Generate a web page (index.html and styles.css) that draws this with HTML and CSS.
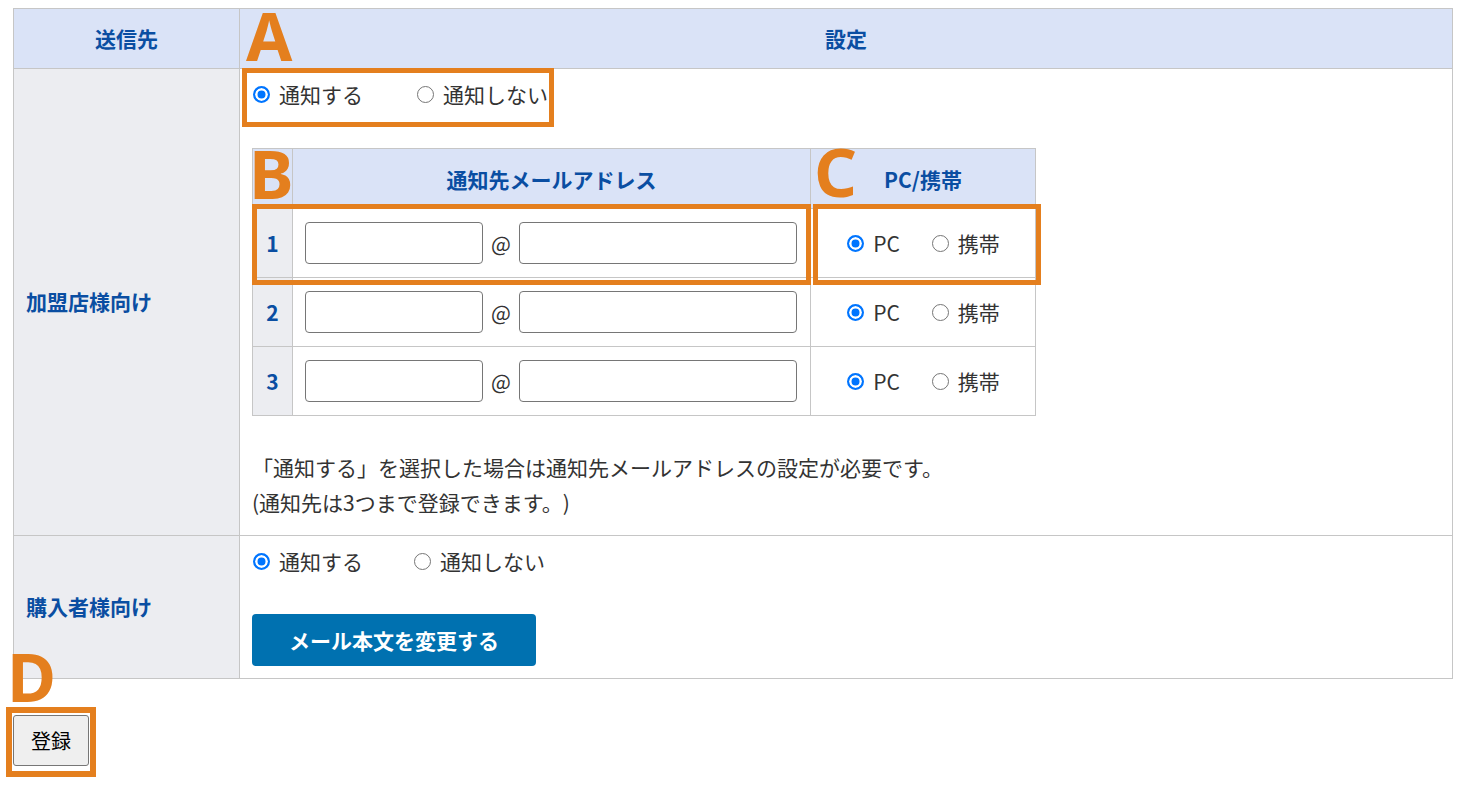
FILE: index.html
```html
<!DOCTYPE html>
<html lang="ja">
<head>
<meta charset="utf-8">
<title>通知設定</title>
<link rel="stylesheet" href="styles.css">
</head>
<body>
<div class="page">
  <table class="main">
    <colgroup><col class="c-label"><col></colgroup>
    <thead>
      <tr><th>送信先</th><th>設定</th></tr>
    </thead>
    <tbody>
      <tr>
        <th class="label">加盟店様向け</th>
        <td class="setting setting-shop">
          <div class="radios">
            <label class="opt opt-gap"><input type="radio" name="shop" checked><span>通知する</span></label>
            <label class="opt"><input type="radio" name="shop"><span>通知しない</span></label>
          </div>
          <table class="mails">
            <colgroup><col class="c-num"><col class="c-mail"><col class="c-pc"></colgroup>
            <thead>
              <tr><th></th><th>通知先メールアドレス</th><th>PC/携帯</th></tr>
            </thead>
            <tbody>
              <tr>
                <th class="num">1</th>
                <td class="mail"><div class="mail-row"><input class="field field-user" type="text"><span class="at">@</span><input class="field field-domain" type="text"></div></td>
                <td class="pc"><div class="pc-row"><label class="opt opt-pc"><input type="radio" name="d1" checked><span>PC</span></label><label class="opt"><input type="radio" name="d1"><span>携帯</span></label></div></td>
              </tr>
              <tr>
                <th class="num">2</th>
                <td class="mail"><div class="mail-row"><input class="field field-user" type="text"><span class="at">@</span><input class="field field-domain" type="text"></div></td>
                <td class="pc"><div class="pc-row"><label class="opt opt-pc"><input type="radio" name="d2" checked><span>PC</span></label><label class="opt"><input type="radio" name="d2"><span>携帯</span></label></div></td>
              </tr>
              <tr>
                <th class="num">3</th>
                <td class="mail"><div class="mail-row"><input class="field field-user" type="text"><span class="at">@</span><input class="field field-domain" type="text"></div></td>
                <td class="pc"><div class="pc-row"><label class="opt opt-pc"><input type="radio" name="d3" checked><span>PC</span></label><label class="opt"><input type="radio" name="d3"><span>携帯</span></label></div></td>
              </tr>
            </tbody>
          </table>
          <p class="note">「通知する」を選択した場合は通知先メールアドレスの設定が必要です。<br>(通知先は3つまで登録できます。)</p>
        </td>
      </tr>
      <tr>
        <th class="label">購入者様向け</th>
        <td class="setting setting-buyer">
          <div class="radios">
            <label class="opt opt-gap2"><input type="radio" name="buyer" checked><span>通知する</span></label>
            <label class="opt"><input type="radio" name="buyer"><span>通知しない</span></label>
          </div>
          <button class="btn-mail" type="button">メール本文を変更する</button>
        </td>
      </tr>
    </tbody>
  </table>
  <button class="submit" type="button">登録</button>
</div>

<div class="mark-box box-a"></div>
<div class="mark-box box-b"></div>
<div class="mark-box box-c"></div>
<div class="mark-box box-d"></div>
<div class="mark-letter letter-a">A</div>
<div class="mark-letter letter-b">B</div>
<div class="mark-letter letter-c">C</div>
<div class="mark-letter letter-d">D</div>
</body>
</html>
```

FILE: styles.css
```css
* { box-sizing: border-box; }
html, body { margin: 0; padding: 0; background: #fff; }
body {
  position: relative;
  font-family: "Noto Sans CJK JP", "Noto Sans", sans-serif;
  font-size: 21px;
  color: #333;
  min-height: 799px;
  text-spacing-trim: space-all;
}
.page { padding: 8px 17px 0 13px; }

.main {
  width: 1440px;
  border-collapse: collapse;
  table-layout: fixed;
}
.main > thead > tr > th,
.main > tbody > tr > th,
.main > tbody > tr > td { border: 1px solid #c6c6c6; }
.c-label { width: 226px; }

.main > thead th {
  height: 60px;
  padding: 0 0 2px;
  background: #dae3f7;
  color: #0a4ea2;
  font-weight: 700;
  text-align: center;
}
.label {
  background: #ecedf1;
  color: #0a4ea2;
  font-weight: 700;
  text-align: left;
  padding: 0 0 3px 12px;
}
.setting { vertical-align: top; padding: 8px 12px 14px; }
.setting-buyer { padding: 8px 12px 12px; }

.radios { display: flex; align-items: center; height: 35px; }
.opt { display: flex; align-items: center; line-height: 35px; }
.opt input {
  appearance: none;
  -webkit-appearance: none;
  width: 17px; height: 17px;
  margin: 0 9px 0 1px;
  border: 1.5px solid #767676;
  border-radius: 50%;
  background: #fff;
  flex: none;
}
.opt input:checked {
  border: 2px solid #0075ff;
  background: #0075ff;
  box-shadow: inset 0 0 0 2.5px #fff;
}
.opt-gap { margin-right: 53px; }
.opt-gap2 { margin-right: 50px; }

.mails {
  margin-top: 36px;
  width: 784px;
  border-collapse: collapse;
  table-layout: fixed;
}
.mails th, .mails td { border: 1px solid #c6c6c6; padding: 0; }
.c-num { width: 40px; }
.c-mail { width: 518px; }
.c-pc { width: 225px; }
.mails thead th {
  height: 60px;
  background: #dae3f7;
  color: #0a4ea2;
  font-weight: 700;
  text-align: center;
}
.mails tbody tr { height: 69px; }
.mails .num {
  background: #ecedf1;
  color: #0a4ea2;
  font-weight: 700;
  text-align: center;
}
.mails .mail { padding: 0 13px 0 12px; }
.mail-row { display: flex; align-items: center; }
.field {
  height: 42px;
  border: 1px solid #767676;
  border-radius: 4px;
  background: #fff;
  font: inherit;
  padding: 0 8px;
  flex: none;
}
.field-user { width: 178px; }
.field-domain { width: 278px; }
.at { flex: 1; text-align: center; color: #333; }
.pc-row { display: flex; justify-content: center; align-items: center; }
.opt-pc { margin-right: 31px; }

.note { margin: 34px 0 0; line-height: 35px; }
.setting-shop { padding-bottom: 15px; }

.btn-mail {
  display: block;
  margin-top: 35px;
  width: 284px;
  height: 52px;
  border: none;
  border-radius: 4px;
  background: #0071b0;
  color: #fff;
  font: 700 21px "Noto Sans CJK JP", "Noto Sans", sans-serif;
}

.submit {
  display: block;
  margin-top: 36px;
  width: 76px;
  height: 51px;
  border: 1px solid #767676;
  border-radius: 3px;
  background: #efefef;
  color: #000;
  font: 400 20px "Noto Sans CJK JP", "Noto Sans", sans-serif;
  padding: 0;
}

/* annotation overlays */
.mark-box {
  position: absolute;
  border: 5px solid #e47f1e;
  pointer-events: none;
}
.box-a { left: 242px; top: 68px; width: 312px; height: 59px; }
.box-b { left: 252px; top: 204px; width: 559px; height: 81px; }
.box-c { left: 813px; top: 204px; width: 228px; height: 81px; }
.box-d { left: 6px; top: 707px; width: 90px; height: 70px; border-width: 6px; }

.mark-letter {
  position: absolute;
  font-family: "Noto Sans", sans-serif;
  font-weight: 700;
  font-size: 67px;
  line-height: 1;
  color: #e47f1e;
}
.letter-a { left: 246px; top: 2px; }
.letter-b { left: 249px; top: 140px; }
.letter-c { left: 814px; top: 138px; }
.letter-d { left: 7px; top: 643px; }
```
